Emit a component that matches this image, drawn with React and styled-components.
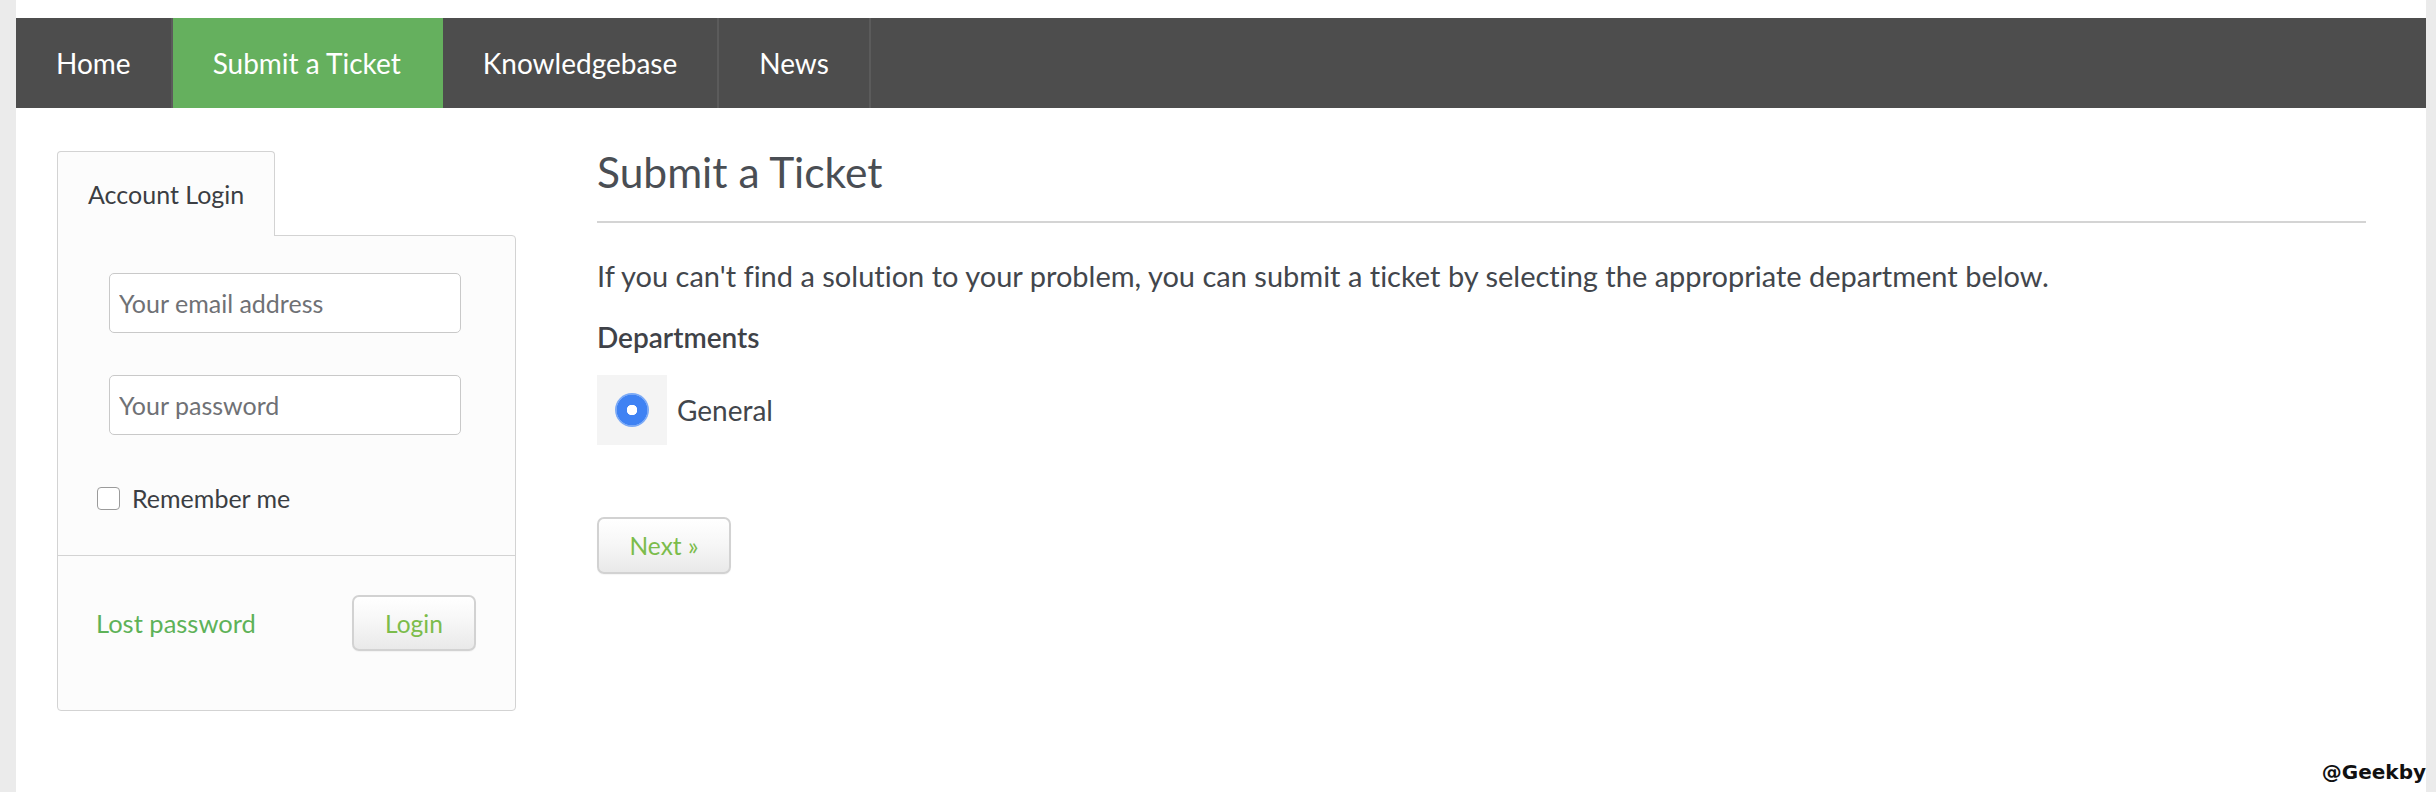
import React from 'react';
import styled, { createGlobalStyle } from 'styled-components';

const GlobalStyle = createGlobalStyle`
  html, body {
    margin: 0;
    padding: 0;
    background: #ebebeb;
  }
  body {
    font-family: Lato, "Open Sans", "Liberation Sans", sans-serif;
    font-variant-ligatures: none;
    color: #42464c;
  }
  * {
    box-sizing: border-box;
  }
`;

const Page = styled.div`
  position: relative;
  margin: 0 10px 0 16px;
  min-height: 792px;
  padding-top: 18px;
  background: #ffffff;
`;

const Nav = styled.nav`
  display: flex;
  height: 90px;
  background: #4d4d4d;
`;

const NavItem = styled.a`
  display: flex;
  align-items: center;
  padding: 0 40px;
  font-size: 28px;
  color: #ffffff;
  text-decoration: none;
  background: ${p => (p.$active ? '#65b05e' : 'transparent')};
  border-right: 2px solid ${p => (p.$active ? '#65b05e' : '#5b5b5b')};
`;

const Content = styled.div`
  display: flex;
  align-items: flex-start;
  gap: 81px;
  padding: 43px 60px 0 41px;
`;

const Sidebar = styled.aside`
  width: 459px;
  flex: none;
`;

const Tab = styled.div`
  position: relative;
  z-index: 1;
  display: flex;
  align-items: center;
  width: 218px;
  height: 85px;
  margin-bottom: -1px;
  padding-left: 30px;
  font-size: 25px;
  color: #3b3e43;
  background: #fcfcfc;
  border: 1px solid #d3d3d3;
  border-bottom: none;
  border-radius: 4px 4px 0 0;
`;

const Box = styled.div`
  background: #fcfcfc;
  border: 1px solid #d3d3d3;
  border-radius: 0 4px 4px 4px;
`;

const Form = styled.div`
  display: flex;
  flex-direction: column;
  padding: 37px 0 46px 39px;
`;

const Input = styled.input`
  width: 352px;
  height: 60px;
  margin-left: 12px;
  margin-bottom: ${p => p.$gap || 0}px;
  padding: 0 9px;
  font-family: inherit;
  font-size: 25px;
  color: #444;
  background: #ffffff;
  border: 1px solid #c9c9c9;
  border-radius: 5px;
  outline: none;
  &::placeholder {
    color: #6f7175;
  }
`;

const CheckRow = styled.label`
  display: flex;
  align-items: center;
  gap: 12px;
  height: 22px;
  font-size: 25px;
  color: #3b3e43;
`;

const Check = styled.input`
  appearance: none;
  width: 23px;
  height: 23px;
  margin: 0;
  background: #ffffff;
  border: 1px solid #9b9b9b;
  border-radius: 4px;
`;

const Footer = styled.div`
  display: flex;
  align-items: center;
  justify-content: space-between;
  padding: 39px 39px 59px 38px;
  border-top: 1px solid #d3d3d3;
`;

const Link = styled.a`
  font-size: 25.5px;
  color: #5eb258;
  text-decoration: none;
`;

const Button = styled.button`
  display: flex;
  align-items: center;
  justify-content: center;
  width: ${p => p.$w}px;
  height: ${p => p.$h}px;
  padding: 0;
  font-family: inherit;
  font-size: 24.5px;
  font-variant-ligatures: none;
  color: #7cbc4b;
  background: linear-gradient(#ffffff 0%, #f7f7f7 45%, #e9e9e9 100%);
  border: 2px solid #d2d2d2;
  border-radius: 7px;
  box-shadow: 0 1px 1px rgba(0, 0, 0, 0.04);
`;

const Main = styled.main`
  flex: 1;
`;

const Title = styled.h1`
  margin: 0;
  font-size: 42.5px;
  line-height: 42px;
  font-weight: 400;
  color: #4a4e54;
`;

const Rule = styled.hr`
  margin: 28px 0 0;
  height: 2px;
  border: none;
  background: #d4d4d4;
`;

const Text = styled.p`
  margin: ${p => p.$top}px 0 0;
  font-size: ${p => (p.$strong ? 28 : 29)}px;
  line-height: 36px;
  font-weight: ${p => (p.$strong ? 600 : 400)};
  color: ${p => (p.$strong ? '#3f4248' : '#42464c')};
`;

const RadioRow = styled.label`
  display: flex;
  align-items: center;
  gap: 10px;
  margin-top: 20px;
  font-size: 28px;
  color: #42464c;
`;

const RadioCell = styled.span`
  display: flex;
  align-items: center;
  justify-content: center;
  width: 70px;
  height: 70px;
  background: #f4f4f4;
`;

const Radio = styled.input`
  appearance: none;
  width: 34px;
  height: 34px;
  margin: 0;
  border-radius: 50%;
  background: radial-gradient(circle, #ffffff 0 5px, #3f82f3 5.5px 15px, #7aa9f6 15.5px);
`;

const Actions = styled.div`
  margin-top: 72px;
`;

const Watermark = styled.div`
  position: absolute;
  right: 0;
  bottom: 8px;
  font-family: "DejaVu Sans", sans-serif;
  font-weight: 700;
  font-size: 20px;
  color: #111;
`;

export default function App() {
  return (
    <>
      <GlobalStyle />
      <Page>
        <Nav>
          <NavItem>Home</NavItem>
          <NavItem $active>Submit a Ticket</NavItem>
          <NavItem>Knowledgebase</NavItem>
          <NavItem>News</NavItem>
        </Nav>
        <Content>
          <Sidebar>
            <Tab>Account Login</Tab>
            <Box>
              <Form>
                <Input $gap={42} placeholder="Your email address" />
                <Input $gap={52} type="password" placeholder="Your password" />
                <CheckRow>
                  <Check type="checkbox" />
                  Remember me
                </CheckRow>
              </Form>
              <Footer>
                <Link>Lost password</Link>
                <Button $w={124} $h={56}>Login</Button>
              </Footer>
            </Box>
          </Sidebar>
          <Main>
            <Title>Submit a Ticket</Title>
            <Rule />
            <Text $top={35}>
              If you can't find a solution to your problem, you can submit a ticket by selecting the appropriate department below.
            </Text>
            <Text $top={25} $strong>Departments</Text>
            <RadioRow>
              <RadioCell>
                <Radio type="radio" name="dept" defaultChecked />
              </RadioCell>
              General
            </RadioRow>
            <Actions>
              <Button $w={134} $h={57}>Next »</Button>
            </Actions>
          </Main>
        </Content>
        <Watermark>@Geekby</Watermark>
      </Page>
    </>
  );
}
